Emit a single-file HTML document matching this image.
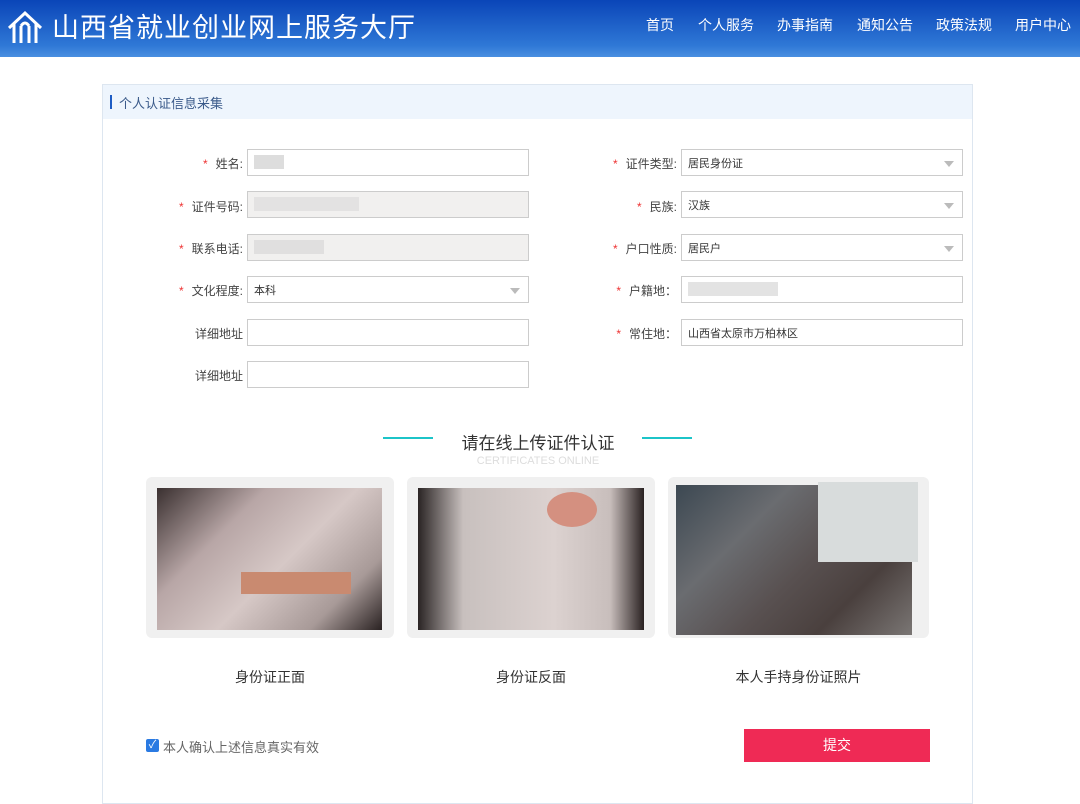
<!DOCTYPE html>
<html><head><meta charset="utf-8"><style>
*{margin:0;padding:0;box-sizing:border-box}
body{width:1080px;height:797px;overflow:hidden;background:#fff;font-family:"Liberation Sans","Noto Sans CJK SC",sans-serif;position:relative}
.hd{position:absolute;left:0;top:0;width:1080px;height:57px;background:linear-gradient(#0a45b8,#2f78d6 80%,#4a8fe0)}
.hd .t{position:absolute;left:52px;top:6px;color:#fff;font-size:27px;letter-spacing:1px}
.nav{position:absolute;top:15px;color:#fff;font-size:14px}
.card{position:absolute;left:102px;top:84px;width:871px;height:720px;border:1px solid #dde6f0}
.card .bar{height:34px;background:#eef5fd;font-size:13px;color:#3a5a8a;padding:8px 0 0 16px;position:relative}
.card .bar:before{content:"";position:absolute;left:7px;top:10px;width:2px;height:14px;background:#1d5cc4}
.lab{position:absolute;font-size:12px;color:#444;text-align:right;width:140px}
.lab b{color:#e33;font-weight:normal;margin-right:8px}
.in{position:absolute;height:27px;border:1px solid #ccc;background:#fff;font-size:11px;color:#333;padding:5px 6px}
.in.g{background:#f1f0ef}
.in.s:after{content:"";position:absolute;right:8px;top:11px;border:5px solid transparent;border-top:6px solid #bbb}
.ph{position:absolute;top:477px;height:161px;background:#f0f0f0;border-radius:6px}
.ph i{position:absolute;display:block}
.cap{position:absolute;top:667px;font-size:14px;color:#333;text-align:center}
</style></head><body>
<div class="hd">
<svg style="position:absolute;left:6px;top:10px" width="38" height="36" viewBox="0 0 38 36" fill="none" stroke="#fff" stroke-width="3"><path d="M3 18 L19 3 L35 18 M8 14 V33 M30 14 V33 M15 33 V16 M23 33 V16 M15 16 Q19 10 23 16"/></svg>
<div class="t">山西省就业创业网上服务大厅</div>
<div class="nav" style="left:646px">首页</div>
<div class="nav" style="left:698px">个人服务</div>
<div class="nav" style="left:777px">办事指南</div>
<div class="nav" style="left:857px">通知公告</div>
<div class="nav" style="left:936px">政策法规</div>
<div class="nav" style="left:1015px">用户中心</div>
</div>
<div class="card"><div class="bar">个人认证信息采集</div></div>

<div class="lab" style="left:103px;top:155px"><b>*</b>姓名:</div>
<div class="in" style="left:247px;top:149px;width:282px"><span style="display:inline-block;width:30px;height:14px;background:#ddd"></span></div>
<div class="lab" style="left:103px;top:198px"><b>*</b>证件号码:</div>
<div class="in g" style="left:247px;top:191px;width:282px"><span style="display:inline-block;width:105px;height:14px;background:#e3e2e2"></span></div>
<div class="lab" style="left:103px;top:240px"><b>*</b>联系电话:</div>
<div class="in g" style="left:247px;top:234px;width:282px"><span style="display:inline-block;width:70px;height:14px;background:#e0dfdf"></span></div>
<div class="lab" style="left:103px;top:282px"><b>*</b>文化程度:</div>
<div class="in s" style="left:247px;top:276px;width:282px">本科</div>
<div class="lab" style="left:103px;top:325px">详细地址</div>
<div class="in" style="left:247px;top:319px;width:282px"></div>
<div class="lab" style="left:103px;top:367px">详细地址</div>
<div class="in" style="left:247px;top:361px;width:282px"></div>

<div class="lab" style="left:537px;top:155px"><b>*</b>证件类型:</div>
<div class="in s" style="left:681px;top:149px;width:282px">居民身份证</div>
<div class="lab" style="left:537px;top:198px"><b>*</b>民族:</div>
<div class="in s" style="left:681px;top:191px;width:282px">汉族</div>
<div class="lab" style="left:537px;top:240px"><b>*</b>户口性质:</div>
<div class="in s" style="left:681px;top:234px;width:282px">居民户</div>
<div class="lab" style="left:537px;top:282px"><b>*</b>户籍地：</div>
<div class="in" style="left:681px;top:276px;width:282px"><span style="display:inline-block;width:90px;height:14px;background:#e3e3e3"></span></div>
<div class="lab" style="left:537px;top:325px"><b>*</b>常住地：</div>
<div class="in" style="left:681px;top:319px;width:282px">山西省太原市万柏林区</div>

<div style="position:absolute;left:383px;top:437px;width:50px;height:2px;background:#1cc4c8"></div>
<div style="position:absolute;left:642px;top:437px;width:50px;height:2px;background:#1cc4c8"></div>
<div style="position:absolute;left:440px;top:429px;width:196px;text-align:center;font-size:17px;color:#333">请在线上传证件认证</div>
<div style="position:absolute;left:440px;top:455px;width:196px;text-align:center;font-size:11px;color:#ddd">CERTIFICATES ONLINE</div>

<div class="ph" style="left:146px;width:248px"><i style="left:11px;top:11px;width:225px;height:142px;background:linear-gradient(135deg,#3a3030,#b8a6a6 30%,#d6c8c6 55%,#a89a98 80%,#2a2222)"></i><i style="left:95px;top:95px;width:110px;height:22px;background:#c98a70"></i></div>
<div class="ph" style="left:407px;width:248px"><i style="left:11px;top:11px;width:226px;height:142px;background:linear-gradient(90deg,#2a2424,#c8c0be 20%,#dcd2d0 60%,#c8bebc 85%,#2a2222)"></i><i style="left:140px;top:15px;width:50px;height:35px;background:#d49080;border-radius:50%"></i></div>
<div class="ph" style="left:668px;width:261px"><i style="left:8px;top:8px;width:236px;height:150px;background:linear-gradient(135deg,#3c4852,#6a6c70 30%,#585050 55%,#4a403e 75%,#7a7674)"></i><i style="left:150px;top:5px;width:100px;height:80px;background:#d8dcdc"></i></div>

<div class="cap" style="left:146px;width:248px">身份证正面</div>
<div class="cap" style="left:407px;width:248px">身份证反面</div>
<div class="cap" style="left:668px;width:261px">本人手持身份证照片</div>

<div style="position:absolute;left:146px;top:739px;width:13px;height:13px;background:#2a7ae2;border-radius:2px;color:#fff;font-size:11px;line-height:13px;text-align:center">✓</div>
<div style="position:absolute;left:163px;top:737px;font-size:13px;color:#666">本人确认上述信息真实有效</div>
<div style="position:absolute;left:744px;top:729px;width:186px;height:33px;background:#ef2a55;color:#fff;font-size:14px;text-align:center;line-height:33px">提交</div>
</body></html>
